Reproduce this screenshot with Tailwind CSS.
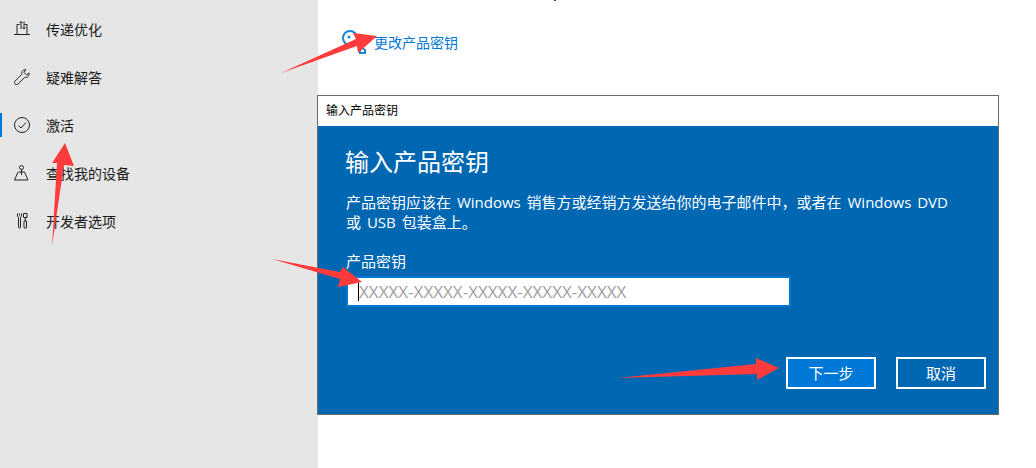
<!DOCTYPE html>
<html lang="zh-CN">

<head>
    <meta charset="UTF-8">
    <title>激活</title>
    <script src="https://cdn.jsdelivr.net/npm/@tailwindcss/browser@4"></script>
</head>

<body class="relative w-[1036px] h-[468px] overflow-hidden bg-white font-['Open_Sans','Noto_Sans_CJK_SC',sans-serif]">
    <div class="flex h-full">
        <!-- Settings sidebar -->
        <aside class="w-[318px] shrink-0 bg-[#e6e6e6] pt-[5px] text-[14px] text-[#1a1a1a]">
            <div class="h-12 flex items-center pl-[14px] gap-[16px]">
                <svg class="w-4 h-4" viewBox="0 0 16 16" fill="none" stroke="#222" stroke-width="1"><path d="M3 3.500V13.500h10V3.500M3 3.500h2.500M10.500 3.500H13M0 13.500h16M7 8V.5M5.500 2 7 .5 8.500 2M10 .5V8M8.500 6.500 10 8l1.500-1.500"/></svg>
                <span>传递优化</span>
            </div>
            <div class="h-12 flex items-center pl-[14px] gap-[16px]">
                <svg class="w-4 h-4" viewBox="0 0 16 16" fill="none" stroke="#222" stroke-width="1"><path d="M12 .8 9.800 3.200l2.900 2.900L15 3.800c.6 2.800-1.500 5-4.300 4.600L4 15c-1 1-2.300.9-3 .1s-.8-2 .1-3l6.600-6.700C7.200 2.600 9.300.3 12 .8Z"/></svg>
                <span>疑难解答</span>
            </div>
            <div class="relative h-12 flex items-center pl-[14px] gap-[16px]">
                <div class="absolute left-0 top-[12px] w-[2px] h-6 bg-[#0078d7]"></div>
                <svg class="w-4 h-4" viewBox="0 0 16 16" fill="none" stroke="#222" stroke-width="1"><circle cx="8" cy="8" r="7.500"/><path d="m4.500 8.500 2.500 2.500 5-5.500"/></svg>
                <span>激活</span>
            </div>
            <div class="h-12 flex items-center pl-[14px] gap-[16px]">
                <svg class="w-4 h-4" viewBox="0 0 16 16" fill="none" stroke="#222" stroke-width="1"><circle cx="7.500" cy="2.500" r="2"/><path d="M7.500 4.500V10M4.500 7h6l3.500 8H.5L4 7"/></svg>
                <span>查找我的设备</span>
            </div>
            <div class="h-12 flex items-center pl-[14px] gap-[16px]">
                <svg class="w-4 h-4" viewBox="0 0 16 16" fill="none" stroke="#222" stroke-width="1"><path d="M3.500.5V3l1 1.500V14a1 1 0 0 0 2 0V4.500l1-1.500V.5M5.500.5v2M9.500.5H13v4H9.500ZM11.200 4.500V8M10 8h2.500v6a1.250 1.250 0 0 1-2.500 0Z"/></svg>
                <span>开发者选项</span>
            </div>
        </aside>

        <main class="flex-1 min-w-0">
            <div class="h-[95px] pl-[24px] pt-[30px]">
                <a class="flex items-center gap-[8px] text-[14px] text-[#0078d7] h-6">
                    <svg class="w-6 h-6" viewBox="0 0 24 24" fill="none" stroke="#1a86dc" stroke-width="2"><circle cx="8" cy="8" r="7"/><circle cx="7" cy="7" r="1.500" fill="#1a86dc" stroke="none"/><path d="M13 13 23 20V23H18V20"/></svg>
                    <span>更改产品密钥</span>
                </a>
            </div>

            <!-- Product key dialog -->
            <div class="w-[682px] h-[320px] -ml-px border border-[#6b6b6b] flex flex-col">
                <div class="h-[30px] bg-white flex items-center pl-[8px] text-[12px] text-black">输入产品密钥</div>
                <div class="flex-1 bg-[#0067b3] pl-[28px] pr-[12px] text-white flex flex-col">
                    <h1 class="mt-[16px] -ml-px text-[24px] leading-[40px]">输入产品密钥</h1>
                    <p class="mt-[10px] text-[15px] leading-[20px] whitespace-nowrap [word-spacing:2px]">产品密钥应该在 Windows 销售方或经销方发送给你的电子邮件中，或者在 Windows DVD<br>或 USB 包装盒上。</p>
                    <label class="mt-[19px] text-[15px] leading-[20px]">产品密钥</label>
                    <div class="mt-[5px] w-[445px] h-[31px] border-2 border-[#0078d7] bg-white flex items-center pl-[10px] text-[17px] text-[#a0a0a0]">
                        <span class="w-px h-[18px] bg-black"></span>XXXXX-XXXXX-XXXXX-XXXXX-XXXXX
                    </div>
                    <div class="mt-[50px] flex justify-end gap-[20px]">
                        <button class="w-[90px] h-[32px] border-2 border-white bg-[#0078d7] text-[15px]">下一步</button>
                        <button class="w-[90px] h-[32px] border-2 border-white text-[15px]">取消</button>
                    </div>
                </div>
            </div>
        </main>
    </div>

    <!-- Red annotation arrows -->
    <svg class="absolute inset-0 pointer-events-none" width="1036" height="468" fill="#ff3b3b">
        <polygon points="281,73 356,39 353,33 377,36 358,53 357,46"/>
        <polygon points="52,246 57,163 52,163 65,143 74,166 64,165"/>
        <polygon points="272,259 340,272 343,267 362,282 338,287 340,279"/>
        <polygon points="617,378 756,364 756,358 779,368 757,380 757,374"/>
    </svg>
    <div class="absolute left-[554px] top-0 w-[2px] h-px bg-[#444]"></div>
</body>

</html>
